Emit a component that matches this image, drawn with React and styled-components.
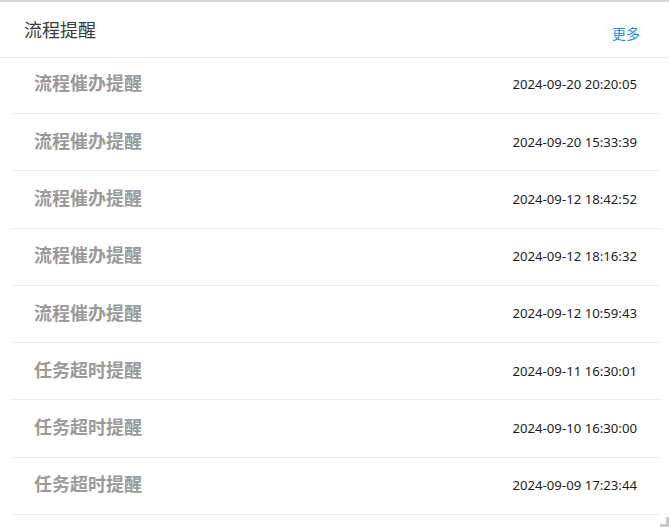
import styled, { createGlobalStyle } from 'styled-components';

const GlobalStyle = createGlobalStyle`
    html, body {
        margin: 0;
        padding: 0;
        background: #fff;
    }
    body {
        font-family: "Noto Sans", "Noto Sans CJK SC", sans-serif;
    }
`

const Panel = styled.div`
    position: relative;
    width: 669px;
    height: 527px;
    box-sizing: border-box;
    border-top: 2px solid #d6d6d6;
    background: #fff;
    overflow: hidden;
`

const Header = styled.div`
    display: flex;
    align-items: center;
    justify-content: space-between;
    height: 56px;
    box-sizing: border-box;
    padding: 0 29px 0 24px;
    border-bottom: 1px solid #eeeeee;
`

const Title = styled.div`
    font-family: "Noto Sans CJK SC", sans-serif;
    font-size: 18px;
    color: #3a3a3a;
    line-height: 1;
    margin-top: -1px;
`

const More = styled.a`
    font-family: "Noto Sans CJK SC", sans-serif;
    font-size: 14px;
    color: #1a8fdd;
    text-decoration: none;
    line-height: 1;
    margin-top: 7px;
    cursor: pointer;
`

const List = styled.ul`
    list-style: none;
    margin: 0;
    padding: 0 7px 0 10px;
`

const Row = styled.li`
    display: flex;
    align-items: center;
    justify-content: space-between;
    height: 57.3px;
    box-sizing: border-box;
    padding: 0 25px 2px 24px;
    border-bottom: 1px solid #eeeeee;

    &:first-child {
        height: 56px;
        padding-bottom: 4px;
    }
`

const RowTitle = styled.span`
    font-family: "Noto Sans CJK SC", sans-serif;
    font-size: 18px;
    font-weight: 700;
    color: #9a9a9a;
    line-height: 1;
    margin-bottom: 3px;
`

const RowTime = styled.span`
    font-family: "Noto Sans", sans-serif;
    font-size: 13.2px;
    color: #1e1e1e;
    line-height: 1;
    margin-top: 2px;
`

const Corner = styled.div`
    position: absolute;
    right: 0;
    bottom: 0;
    width: 9px;
    height: 10px;
    border-right: 3px solid #c8c8c8;
    border-bottom: 3px solid #c8c8c8;
    box-sizing: border-box;
`

const reminders = [
    { title: '流程催办提醒', time: '2024-09-20 20:20:05' },
    { title: '流程催办提醒', time: '2024-09-20 15:33:39' },
    { title: '流程催办提醒', time: '2024-09-12 18:42:52' },
    { title: '流程催办提醒', time: '2024-09-12 18:16:32' },
    { title: '流程催办提醒', time: '2024-09-12 10:59:43' },
    { title: '任务超时提醒', time: '2024-09-11 16:30:01' },
    { title: '任务超时提醒', time: '2024-09-10 16:30:00' },
    { title: '任务超时提醒', time: '2024-09-09 17:23:44' },
]

function App() {
    return (
        <>
            <GlobalStyle />
            <Panel>
                <Header>
                    <Title>流程提醒</Title>
                    <More>更多</More>
                </Header>
                <List>
                    {reminders.map((item, i) => (
                        <Row key={i}>
                            <RowTitle>{item.title}</RowTitle>
                            <RowTime>{item.time}</RowTime>
                        </Row>
                    ))}
                </List>
                <Corner />
            </Panel>
        </>
    )
}

export default App;
